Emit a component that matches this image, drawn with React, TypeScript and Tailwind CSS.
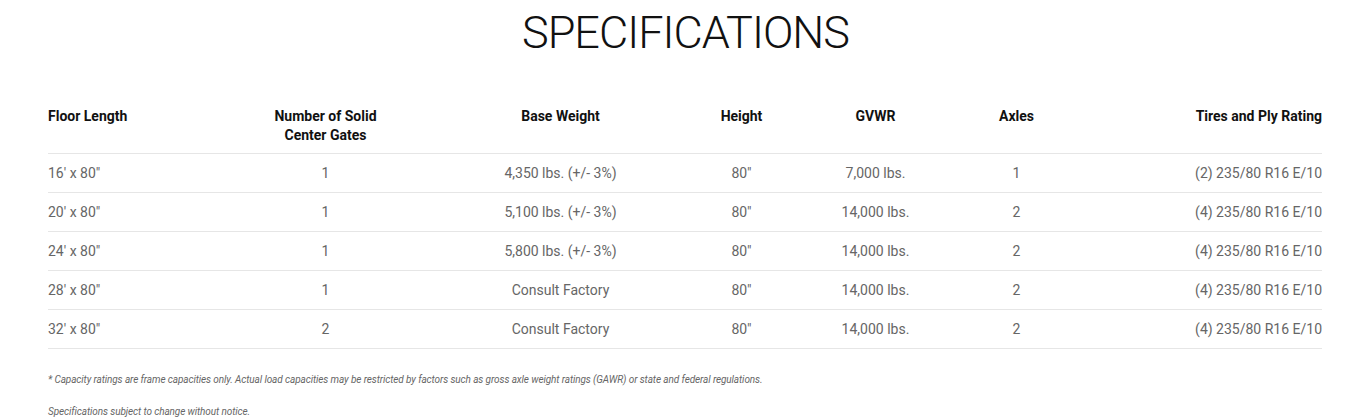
import React from 'react';

const rows = [
  ["16' x 80\"", '1', '4,350 lbs. (+/- 3%)', '80"', '7,000 lbs.', '1', '(2) 235/80 R16 E/10'],
  ["20' x 80\"", '1', '5,100 lbs. (+/- 3%)', '80"', '14,000 lbs.', '2', '(4) 235/80 R16 E/10'],
  ["24' x 80\"", '1', '5,800 lbs. (+/- 3%)', '80"', '14,000 lbs.', '2', '(4) 235/80 R16 E/10'],
  ["28' x 80\"", '1', 'Consult Factory', '80"', '14,000 lbs.', '2', '(4) 235/80 R16 E/10'],
  ["32' x 80\"", '2', 'Consult Factory', '80"', '14,000 lbs.', '2', '(4) 235/80 R16 E/10'],
];

const grid = 'grid grid-cols-[160px_235px_235px_127px_141px_141px_1fr]';

function Cell({ i, children }: { i: number; children: React.ReactNode }) {
  const align = i === 0 ? 'text-left' : i === 6 ? 'text-right' : 'text-center';
  return <div className={align}>{children}</div>;
}

export default function App() {
  return (
    <div className="bg-white min-h-screen font-['Roboto',sans-serif]">
      <h1 className="pt-[6px] pl-[5px] text-center text-[45px] leading-[54px] font-light text-[#111] tracking-[-1px]">
        SPECIFICATIONS
      </h1>

      <div className="ml-[48px] mr-[44px] mt-[47px]">
        <div className={`${grid} pb-[8px] border-b border-[#e6e6e6] text-[14px] leading-[19px] font-bold text-[#111]`}>
          <Cell i={0}>Floor Length</Cell>
          <Cell i={1}>
            Number of Solid
            <br />
            Center Gates
          </Cell>
          <Cell i={2}>Base Weight</Cell>
          <Cell i={3}>Height</Cell>
          <Cell i={4}>GVWR</Cell>
          <Cell i={5}>Axles</Cell>
          <Cell i={6}>Tires and Ply Rating</Cell>
        </div>

        {rows.map((r, ri) => (
          <div
            key={ri}
            className={`${grid} py-[9px] border-b border-[#e6e6e6] text-[14px] leading-[20px] text-[#666]`}
          >
            {r.map((c, i) => (
              <Cell key={i} i={i}>
                {c}
              </Cell>
            ))}
          </div>
        ))}

        <p className="mt-[24px] text-[10px] leading-[14px] italic tracking-[-0.1px] text-[#666]">
          * Capacity ratings are frame capacities only. Actual load capacities may be restricted by factors such as gross axle weight ratings (GAWR) or state and federal regulations.
        </p>
        <p className="mt-[18px] text-[10px] leading-[14px] italic tracking-[-0.1px] text-[#666]">
          Specifications subject to change without notice.
        </p>
      </div>
    </div>
  );
}
